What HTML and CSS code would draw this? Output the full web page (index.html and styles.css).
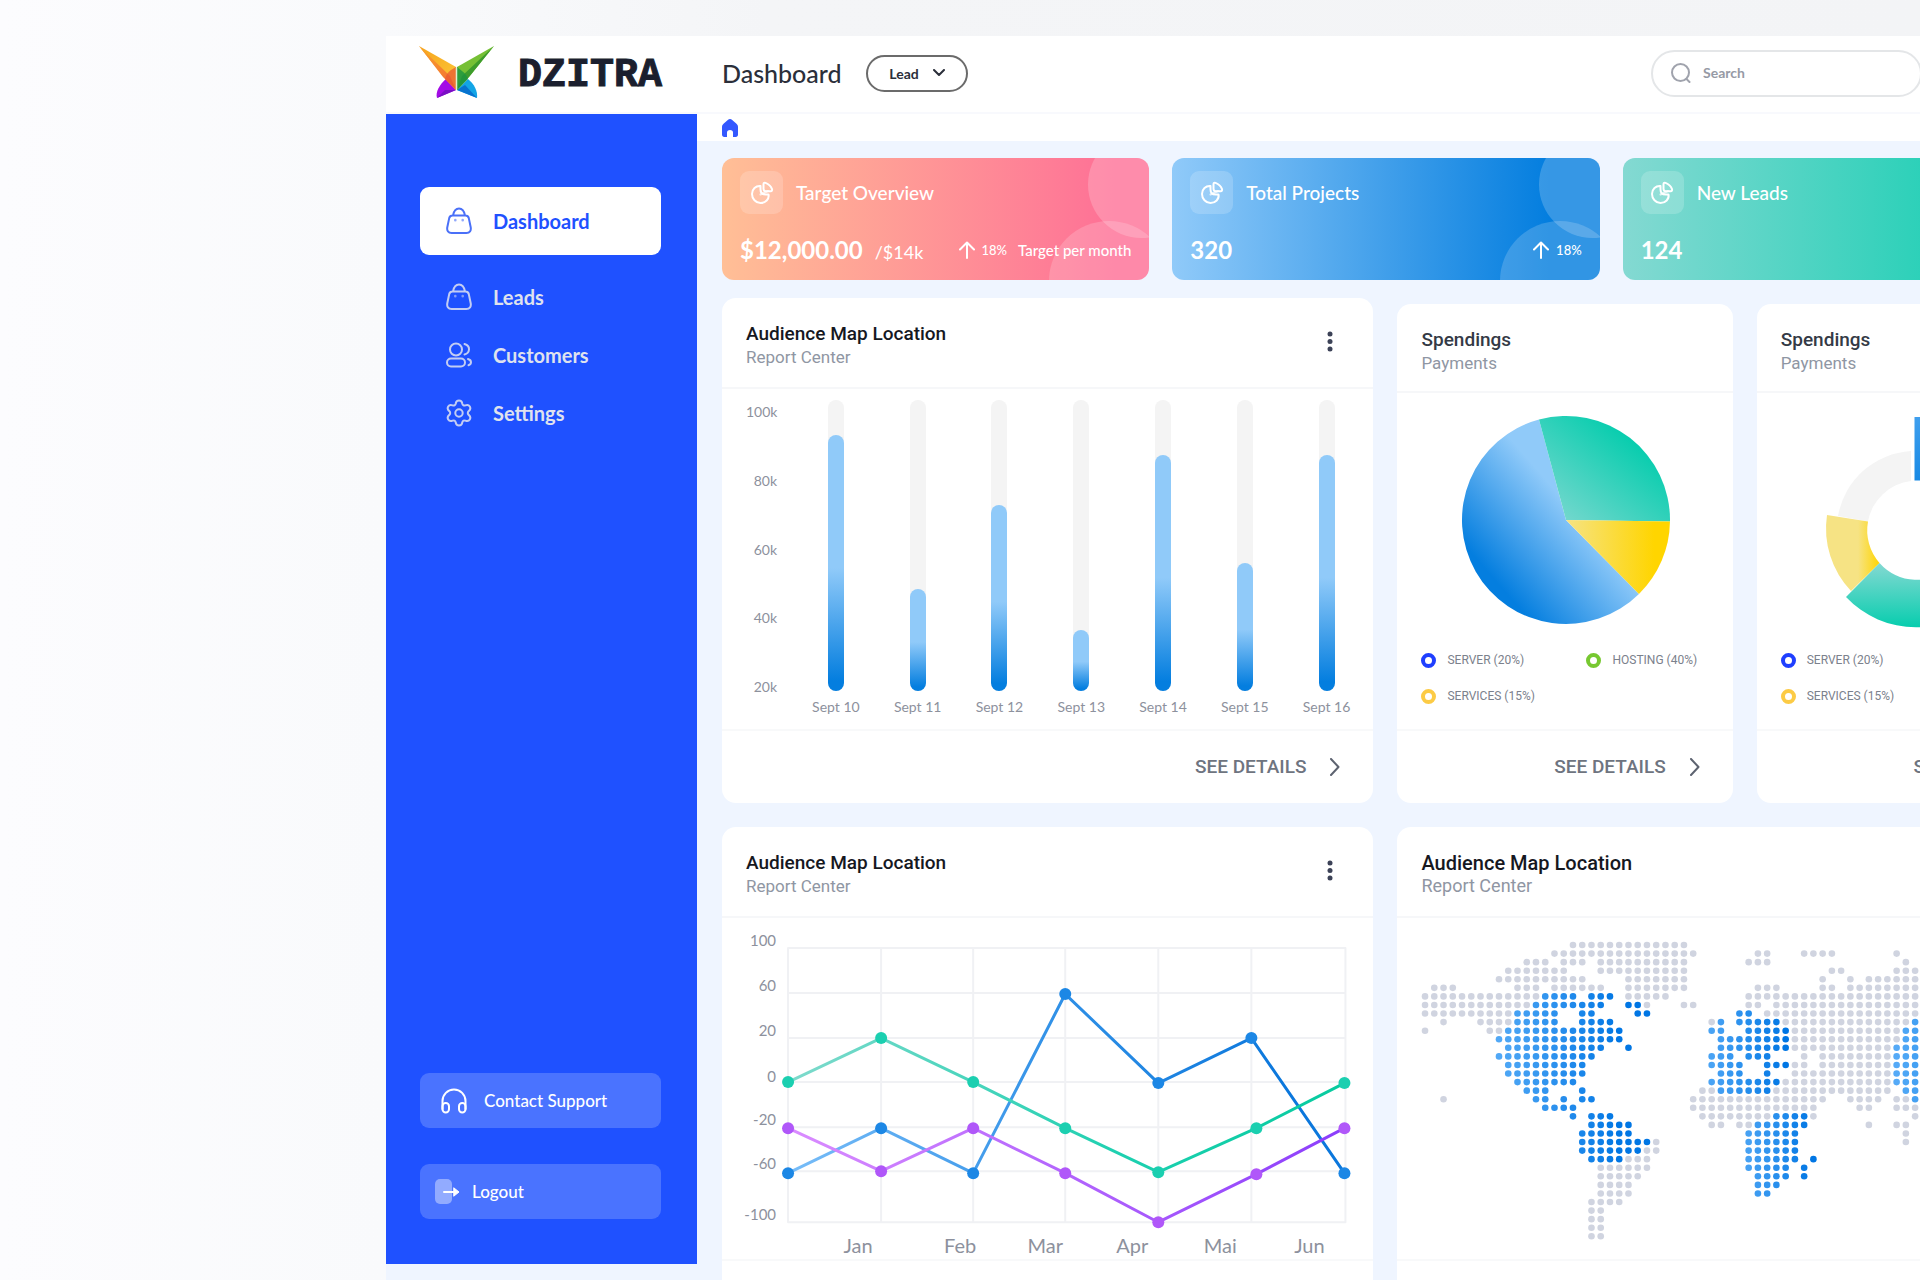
FILE: index.html
```html
<!DOCTYPE html>
<html lang="en">
<head>
<meta charset="utf-8">
<meta name="viewport" content="width=device-width, initial-scale=1">
<title>Dzitra Dashboard</title>
<link rel="stylesheet" href="styles.css">
</head>
<body>
<svg class="defs" width="0" height="0" aria-hidden="true">
  <defs>
    <linearGradient id="info" x1="0" y1="0" x2="1" y2="0"><stop offset="0" stop-color="#78bdf8"/><stop offset=".5" stop-color="#2e8fe6"/><stop offset=".9" stop-color="#0b77dc"/></linearGradient>
    <linearGradient id="mint" x1="0" y1="0" x2="1" y2="0"><stop offset="0" stop-color="#7fdacc"/><stop offset=".6" stop-color="#1dd0b0"/><stop offset="1" stop-color="#07cb9f"/></linearGradient>
    <linearGradient id="violet" x1="0" y1="0" x2="1" y2="0"><stop offset="0" stop-color="#da8cff"/><stop offset="1" stop-color="#8b3dfb"/></linearGradient>
    <linearGradient id="pie-blue" x1=".8" y1=".2" x2=".2" y2=".8"><stop offset=".35" stop-color="#90caf9"/><stop offset="1" stop-color="#047edf"/></linearGradient>
    <linearGradient id="pie-green" x1="0" y1="1" x2="1" y2="0"><stop offset="0" stop-color="#84d9d2"/><stop offset=".75" stop-color="#07cdae"/></linearGradient>
    <linearGradient id="pie-yellow" x1="0" y1="0" x2="1" y2="0"><stop offset="0" stop-color="#f6e384"/><stop offset=".85" stop-color="#ffd500"/></linearGradient>
    <linearGradient id="ring-yellow" x1="0" y1="0" x2="1" y2="0"><stop offset=".6" stop-color="#f6e384"/><stop offset="1" stop-color="#ffd500"/></linearGradient>
    <linearGradient id="ring-green" x1="0" y1="0" x2="0" y2="1"><stop offset="0" stop-color="#84d9d2"/><stop offset="1" stop-color="#07cdae"/></linearGradient>
    <linearGradient id="ring-blue" x1="0" y1="0" x2="0" y2="1"><stop offset="0" stop-color="#3f9fee"/><stop offset=".5" stop-color="#047edf"/></linearGradient>
    <linearGradient id="wing-gold" x1="0" y1="0" x2="1" y2="1"><stop offset="0" stop-color="#f6a31c"/><stop offset="1" stop-color="#fcc93a"/></linearGradient>
    <linearGradient id="wing-orange" x1="0" y1="0" x2="1" y2="1"><stop offset="0" stop-color="#f9a42a"/><stop offset="1" stop-color="#f26a35"/></linearGradient>
  </defs>
  <symbol id="i-bag" viewBox="0 0 26 28"><path d="M6.500 8.500h13c1.800 0 2.800.9 3.300 2.600l1.900 9.200c.6 3.200-.9 5.700-4.300 5.700H5.600c-3.400 0-4.900-2.500-4.300-5.700l1.900-9.200c.5-1.700 1.500-2.600 3.300-2.600zM7 8.500C7.800 4.200 9.800 1.500 13 1.500s5.200 2.700 6 7"/><path d="M9.300 13v.2M16.700 13v.2" stroke-width="2.600" opacity=".6"/></symbol>
  <symbol id="i-users" viewBox="0 0 26 26"><circle cx="10" cy="7.500" r="6"/><rect x="1" y="16.500" width="18" height="8" rx="4"/><path d="M18.500 2c3 1 4.700 3 4.500 5.500s-1.800 4.300-4.500 5M22 17c2 .6 3 1.800 3 3.300s-1 2.500-2.500 3"/></symbol>
  <symbol id="i-gear" viewBox="0 0 26 28"><circle cx="13" cy="14" r="3.700"/><path d="M13 1.500c2 0 3 1 3.300 3.200.4 1.500 1.700 2.200 3.100 1.700 2.100-.9 3.400-.5 4.400 1.200s.7 3.100-1.100 4.500c-1.200 1.100-1.200 2.700 0 3.800 1.800 1.400 2.100 2.800 1.100 4.500s-2.300 2.100-4.400 1.200c-1.400-.5-2.700.2-3.100 1.700C16 25.500 15 26.500 13 26.500s-3-1-3.300-3.200c-.4-1.500-1.700-2.200-3.100-1.700-2.100.9-3.400.5-4.400-1.200s-.7-3.100 1.100-4.500c1.200-1.100 1.200-2.700 0-3.800-1.800-1.400-2.100-2.800-1.100-4.500s2.300-2.100 4.400-1.200c1.400.5 2.700-.2 3.100-1.700C10 2.500 11 1.500 13 1.500z"/></symbol>
  <symbol id="i-pie" viewBox="0 0 24 24"><path d="M10.500 5C5.800 4.500 2 8.300 2 13s3.700 9 8.500 9 9-4 8-8.500h-3c-3 0-5-2-5-5z"/><path d="M13.500 3.200c0-1.200.9-1.700 2-1.300 3 1.100 5.400 3.300 6.500 6.300.4 1.100-.2 2-1.300 2h-4.700c-1.700 0-2.500-.9-2.500-2.500z"/><path d="M10.500 13.500L18 10" opacity=".7"/></symbol>
  <symbol id="i-up" viewBox="0 0 18 18"><path d="M9 17V2M2 8.500L9 1.500l7 7"/></symbol>
  <symbol id="i-next" viewBox="0 0 12 18"><path d="M2 1l7.500 8L2 17"/></symbol>
  <symbol id="i-dots" viewBox="0 0 6 22"><g fill="#3c4257" stroke="none"><circle cx="3" cy="3" r="2.500"/><circle cx="3" cy="10.500" r="2.500"/><circle cx="3" cy="18" r="2.500"/></g></symbol>
</svg>

<div class="app">
  <header class="topbar">
    <a class="brand" href="#">
      <svg width="76" height="54" viewBox="0 0 76 54" aria-hidden="true">
        <path d="M27 33l10 11-19 8c-2-6 3-14 9-19z" fill="#a30be6"/>
        <path d="M37 44l-19 8 8-8z" fill="#7a0fc4"/>
        <path d="M49 33L38 44l20 8c1-7-3-14-9-19z" fill="#13a5e6"/>
        <path d="M38 44l20 8-12-13z" fill="#0873cf"/>
        <path d="M0 0l37 21v23L24 30z" fill="url(#wing-gold)"/>
        <path d="M0 0l31 30 6 14-13-13z" fill="url(#wing-orange)"/>
        <path d="M32 24l5-3v23l-11-11c1-4 3-7 6-9z" fill="#ea5a33" opacity=".75"/>
        <path d="M75 0L38 21v23l12-13z" fill="#76c035"/>
        <path d="M75 0L43 30l-5 14 12-13z" fill="#3d9c2c"/>
        <path d="M38 21l5 4c3 2 5 5 6 8L38 44z" fill="#1b9440" opacity=".8"/>
        <path d="M37.500 22v21" stroke="#dff0d0" stroke-width="1.500"/>
      </svg>
      <span class="brand-name">DZITRA</span>
    </a>
    <h1 class="page-title">Dashboard</h1>
    <button class="role" type="button">Lead
      <svg width="12" height="8" viewBox="0 0 12 8" aria-hidden="true"><path d="M1 1l5 5 5-5"/></svg>
    </button>
    <label class="search">
      <svg width="20" height="20" viewBox="0 0 20 20" aria-hidden="true"><circle cx="9.500" cy="9.500" r="8.500"/><path d="M15.500 16l3 3"/></svg>
      <input type="search" placeholder="Search" aria-label="Search">
    </label>
  </header>

  <div class="shell">
    <aside class="sidebar">
      <nav class="menu">
        <a class="menu-item active" href="#"><svg width="26" height="28"><use href="#i-bag"/></svg>Dashboard</a>
        <a class="menu-item" href="#"><svg width="26" height="28"><use href="#i-bag"/></svg>Leads</a>
        <a class="menu-item" href="#"><svg width="26" height="26"><use href="#i-users"/></svg>Customers</a>
        <a class="menu-item" href="#"><svg width="26" height="28"><use href="#i-gear"/></svg>Settings</a>
      </nav>
      <div class="actions">
        <button class="action support" type="button">
          <svg width="26" height="26" viewBox="0 0 26 26" aria-hidden="true"><path d="M1.500 21v-8a11.500 11.500 0 0 1 23 0v8"/><rect x="1.500" y="15" width="6.500" height="9.500" rx="3.200"/><rect x="18" y="15" width="6.500" height="9.500" rx="3.200"/></svg>
          Contact Support
        </button>
        <button class="action logout" type="button">
          <svg width="26" height="26" viewBox="0 0 26 26" aria-hidden="true"><rect x="1" y="0" width="17" height="25" rx="5" fill="#fff" fill-opacity=".4" stroke="none"/><path d="M10 13h12"/><path d="M20 9l5 4-5 4z" fill="#fff" stroke-width="1"/></svg>
          Logout
        </button>
      </div>
    </aside>

    <main class="main">
      <nav class="crumbs" aria-label="Breadcrumb">
        <a href="#" aria-label="Home"><svg width="16" height="18" viewBox="0 0 16 18"><path d="M8 0c.8 0 1.500.4 2.200 1l4 3.600C15.200 5.500 16 6.500 16 8v7.500c0 1.600-.8 2.500-2.300 2.500H11v-4.500c0-1.500-1-2.500-3-2.500s-3 1-3 2.500V18H2.300C.8 18 0 17.100 0 15.500V8c0-1.500.8-2.500 1.800-3.400l4-3.600C6.500.4 7.200 0 8 0z" fill="#3358ff"/></svg></a>
      </nav>

      <div class="content">
        <section class="stats">
          <article class="stat coral">
            <div class="stat-head"><span class="tile"><svg width="24" height="24"><use href="#i-pie"/></svg></span><h2>Target Overview</h2></div>
            <div class="stat-foot"><strong>$12,000.00</strong><span class="goal">/$14k</span><span class="trend"><svg width="18" height="18"><use href="#i-up"/></svg>18%<span class="note">Target per month</span></span></div>
          </article>
          <article class="stat blue">
            <div class="stat-head"><span class="tile"><svg width="24" height="24"><use href="#i-pie"/></svg></span><h2>Total Projects</h2></div>
            <div class="stat-foot"><strong>320</strong><span class="trend"><svg width="18" height="18"><use href="#i-up"/></svg>18%</span></div>
          </article>
          <article class="stat green">
            <div class="stat-head"><span class="tile"><svg width="24" height="24"><use href="#i-pie"/></svg></span><h2>New Leads</h2></div>
            <div class="stat-foot"><strong>124</strong></div>
          </article>
        </section>

        <section class="row charts">
          <article class="card">
            <div class="card-head"><div><h2>Audience Map Location</h2><p>Report Center</p></div>
              <button class="more" type="button" aria-label="More"><svg width="6" height="22"><use href="#i-dots"/></svg></button></div>
            <div class="bars">
              <div class="scale"><span>100k</span><span>80k</span><span>60k</span><span>40k</span><span>20k</span></div>
              <div class="plot">
                <div class="day"><div class="track"><div class="fill" style="height:88%"></div></div>Sept 10</div>
                <div class="day"><div class="track"><div class="fill" style="height:35%"></div></div>Sept 11</div>
                <div class="day"><div class="track"><div class="fill" style="height:64%"></div></div>Sept 12</div>
                <div class="day"><div class="track"><div class="fill" style="height:21%"></div></div>Sept 13</div>
                <div class="day"><div class="track"><div class="fill" style="height:81%"></div></div>Sept 14</div>
                <div class="day"><div class="track"><div class="fill" style="height:44%"></div></div>Sept 15</div>
                <div class="day"><div class="track"><div class="fill" style="height:81%"></div></div>Sept 16</div>
              </div>
            </div>
            <div class="card-foot"><a href="#">SEE DETAILS <svg width="12" height="18"><use href="#i-next"/></svg></a></div>
          </article>

          <article class="card small">
            <div class="card-head"><div><h2>Spendings</h2><p>Payments</p></div></div>
            <div class="round">
              <svg width="228" height="228" viewBox="0 0 228 228" role="img" aria-label="Spendings by type">
                <path d="M115 114L188 188A104 104 0 1 1 88 13.500z" fill="url(#pie-blue)"/>
                <path d="M115 114L88 13.500A104 104 0 0 1 219 115.500z" fill="url(#pie-green)"/>
                <path d="M115 114L219 115.500A104 104 0 0 1 188 188z" fill="url(#pie-yellow)"/>
              </svg>
            </div>
            <ul class="legend"><li class="server">SERVER (20%)</li><li class="hosting">HOSTING (40%)</li><li class="services">SERVICES (15%)</li></ul>
            <div class="card-foot"><a href="#">SEE DETAILS <svg width="12" height="18"><use href="#i-next"/></svg></a></div>
          </article>

          <article class="card small">
            <div class="card-head"><div><h2>Spendings</h2><p>Payments</p></div></div>
            <div class="round">
              <svg width="228" height="228" viewBox="0 0 228 228" role="img" aria-label="Spendings by share">
                <path d="M101 45A79 79 0 0 0 28 110L58 115.500A49.500 49.500 0 0 1 101 75z" fill="#f4f4f4"/>
                <path d="M17 109L58 115.500A49.500 49.500 0 0 0 69.500 157L41 185A91 91 0 0 1 17 109z" fill="url(#ring-yellow)"/>
                <path d="M69.500 157L36 191A96 96 0 0 0 176 191L141 160A49.500 49.500 0 0 1 69.500 157z" fill="url(#ring-green)"/>
                <path d="M104.500 11V74.500A49.500 49.500 0 0 1 141 160L190 203A114 114 0 0 0 104.500 11z" fill="url(#ring-blue)"/>
              </svg>
            </div>
            <ul class="legend"><li class="server">SERVER (20%)</li><li class="hosting">HOSTING (40%)</li><li class="services">SERVICES (15%)</li></ul>
            <div class="card-foot"><a href="#">SEE DETAILS <svg width="12" height="18"><use href="#i-next"/></svg></a></div>
          </article>
        </section>

        <section class="row wide">
          <article class="card">
            <div class="card-head"><div><h2>Audience Map Location</h2><p>Report Center</p></div>
              <button class="more" type="button" aria-label="More"><svg width="6" height="22"><use href="#i-dots"/></svg></button></div>
            <svg class="lines" viewBox="0 0 651 341" role="img" aria-label="Audience by month">
              <g class="grid"><path d="M66 30H623M66 75H623M66 120H623M66 164H623M66 209H623M66 253H623M66 304H623M66 30V304M159 30V304M251 30V304M343 30V304M436 30V304M529 30V304M623 30V304"/></g>
              <g class="ticks"><text x="54" y="28">100</text><text x="54" y="73">60</text><text x="54" y="118">20</text><text x="54" y="164">0</text><text x="54" y="207">-20</text><text x="54" y="251">-60</text><text x="54" y="302">-100</text></g>
              <g class="months"><text x="136" y="335">Jan</text><text x="238" y="335">Feb</text><text x="323" y="335">Mar</text><text x="410" y="335">Apr</text><text x="498" y="335">Mai</text><text x="587" y="335">Jun</text></g>
              <g class="series">
                <polyline stroke="url(#info)" points="66,255 159,210 251,255 343,76 436,165 529,120 622,255"/>
                <polyline stroke="url(#mint)" points="66,164 159,120 251,164 343,210 436,254 534,210 622,165"/>
                <polyline stroke="url(#violet)" points="66,210 159,253 251,210 343,255 436,304 534,256 622,210"/>
              </g>
              <g fill="#1c87e5"><circle cx="66" cy="255" r="6"/><circle cx="159" cy="210" r="6"/><circle cx="251" cy="255" r="6"/><circle cx="343" cy="76" r="6"/><circle cx="436" cy="165" r="6"/><circle cx="529" cy="120" r="6"/><circle cx="622" cy="255" r="6"/></g>
              <g fill="#1bcfb0"><circle cx="66" cy="164" r="6"/><circle cx="159" cy="120" r="6"/><circle cx="251" cy="164" r="6"/><circle cx="343" cy="210" r="6"/><circle cx="436" cy="254" r="6"/><circle cx="534" cy="210" r="6"/><circle cx="622" cy="165" r="6"/></g>
              <g fill="#b057f9"><circle cx="66" cy="210" r="6"/><circle cx="159" cy="253" r="6"/><circle cx="251" cy="210" r="6"/><circle cx="343" cy="255" r="6"/><circle cx="436" cy="304" r="6"/><circle cx="534" cy="256" r="6"/><circle cx="622" cy="210" r="6"/></g>
            </svg>
            <div class="card-foot"></div>
          </article>
          <article class="card geo">
            <div class="card-head"><div><h2>Audience Map Location</h2><p>Report Center</p></div></div>
            <svg class="map" id="map" viewBox="0 0 694 341" role="img" aria-label="World map"></svg>
            <div class="card-foot"></div>
          </article>
        </section>
      </div>
    </main>
  </div>
</div>
<script src="map.js"></script>
</body>
</html>
```
FILE: styles.css
```css
*, *::before, *::after { box-sizing: border-box; }

body {
  margin: 0;
  height: 100vh;
  overflow: hidden;
  background: linear-gradient(90deg, #fcfcfe 0, #f9fafc 20%, #f4f5f7 40%, #f3f4f6 100%);
  font-family: Lato, "Open Sans", sans-serif;
  color: #2b2f3a;
}

h1, h2, p, ul { margin: 0; padding: 0; }
a { color: inherit; text-decoration: none; }
button { font: inherit; color: inherit; border: 0; background: none; padding: 0; cursor: pointer; }
svg { display: block; flex: none; fill: none; stroke-linecap: round; stroke-linejoin: round; }
.defs { position: absolute; }

.app {
  display: flex;
  flex-direction: column;
  width: 90vw;
  height: calc(100vh - 36px);
  margin: 36px 0 0 386px;
  background: #eff5ff;
}

/* Top bar */
.topbar {
  display: flex;
  align-items: center;
  flex: none;
  height: 78px;
  padding: 0 192px 2px 33px;
  background: #fff;
  border-bottom: 2px solid #f8f9fd;
}
.brand { display: flex; align-items: center; gap: 23px; width: 303px; }
.brand-name {
  padding-top: 6px;
  font: 700 40px/48px "Liberation Mono", monospace;
  color: #1b1f2e;
  -webkit-text-stroke: 1px #1b1f2e;
}
.page-title { font-size: 25px; line-height: 32px; font-weight: 500; width: 144px; }
.role {
  display: flex;
  align-items: center;
  justify-content: center;
  gap: 14px;
  width: 102px;
  height: 37px;
  border: 2px solid #6b6b6b;
  border-radius: 19px;
  font-size: 14px;
  font-weight: 700;
}
.role svg { stroke: #2b2f3a; stroke-width: 2; }
.search {
  display: flex;
  align-items: center;
  gap: 12px;
  width: 271px;
  height: 47px;
  margin-left: auto;
  padding: 0 18px;
  border: 2px solid #e4e6e8;
  border-radius: 24px;
}
.search svg { stroke: #a0a3ad; stroke-width: 2; }
.search input {
  flex: 1;
  min-width: 0;
  border: 0;
  outline: 0;
  padding: 0;
  background: none;
  font: 700 14px/20px Lato, sans-serif;
}
.search input::placeholder { color: #969aa5; opacity: 1; }

.shell { display: flex; flex: 1; min-height: 0; }

/* Sidebar */
.sidebar {
  display: flex;
  flex-direction: column;
  justify-content: space-between;
  flex: none;
  width: 311px;
  margin-bottom: 16px;
  padding: 73px 36px 45px 34px;
  background: #1f51ff;
}
.menu { display: flex; flex-direction: column; }
.menu-item {
  display: flex;
  align-items: center;
  gap: 21px;
  height: 58px;
  padding-left: 26px;
  font-size: 20px;
  font-weight: 700;
  color: #dfe2ee;
}
.menu-item svg { stroke: #c3cdf3; stroke-width: 2; width: 26px; }
.menu-item.active {
  height: 68px;
  margin-bottom: 13px;
  border-radius: 9px;
  background: #fff;
  color: #1f51ff;
}
.menu-item.active svg { stroke: #4a70f8; }
.actions { display: flex; flex-direction: column; gap: 36px; }
.action {
  display: flex;
  align-items: center;
  height: 55px;
  border-radius: 9px;
  background: #4a73ff;
  color: #fff;
  font-size: 17px;
  font-weight: 500;
}
.action svg { stroke: #fff; stroke-width: 2; }
.support { gap: 17px; padding-left: 21px; }
.logout { gap: 12px; padding-left: 14px; }

/* Main column */
.main { flex: 1; min-width: 0; overflow: hidden; }
.crumbs { display: flex; align-items: center; height: 27px; padding: 0 25px; background: #fff; }
.content { padding: 17px 22px 24px 25px; }

.stats { display: grid; grid-template-columns: repeat(3, 1fr); gap: 23px; margin: 0 42px 18px 0; }
.stat {
  position: relative;
  overflow: hidden;
  display: flex;
  flex-direction: column;
  justify-content: space-between;
  height: 122px;
  padding: 13px 18px 14px;
  border-radius: 12px;
  color: #fff;
}
.stat::before, .stat::after { content: ""; position: absolute; border-radius: 50%; background: #fff; opacity: .2; }
.stat::before { width: 107px; height: 107px; right: -46px; top: -27px; }
.stat::after { width: 120px; height: 120px; right: -20px; bottom: -61px; opacity: .18; }
.coral { background: linear-gradient(to right, #ffbf96, #fe7096 92%); }
.blue { background: linear-gradient(to right, #90caf9, #047edf 88%); }
.green { background: linear-gradient(to right, #84d9d2, #07cdae); }
.stat > * { position: relative; z-index: 1; }
.stat-head { display: flex; align-items: center; gap: 13px; }
.stat-head h2 { font-size: 19px; line-height: 24px; font-weight: 500; }
.tile { display: grid; place-items: center; width: 43px; height: 43px; border-radius: 9px; background: rgba(255, 255, 255, .18); }
.stat svg { stroke: #fff; stroke-width: 2; }
.stat-foot { display: flex; align-items: center; height: 32px; }
.stat-foot strong { font-size: 24px; line-height: 32px; font-weight: 700; }
.goal { margin: 4px 0 0 12px; font-size: 18px; }
.trend { display: flex; align-items: center; gap: 6px; margin-left: auto; font-size: 13px; font-weight: 500; }
.note { margin-left: 5px; font-size: 15px; }

.row { display: grid; gap: 24px; margin-bottom: 24px; }
.charts { grid-template-columns: 651fr 335fr 335fr; align-items: end; }
.wide { grid-template-columns: 651fr 694fr; }

/* Cards */
.card { background: #fff; border-radius: 14px; font-family: Roboto, sans-serif; min-width: 0; }
.card-head {
  display: flex;
  justify-content: space-between;
  height: 91px;
  padding: 24px 40px 0 24px;
  border-bottom: 2px solid #f6f7f9;
}
.card-head h2 { font-size: 19px; line-height: 24px; font-weight: 500; color: #16181f; }
.card-head p { font-size: 17px; line-height: 22px; color: #8f96a3; }
.small .card-head h2 { color: #343a46; }
.geo .card-head h2 { font-size: 20px; }
.geo .card-head p { font-size: 18px; }
.more { align-self: flex-start; margin-top: 9px; }
.card-foot {
  display: flex;
  align-items: center;
  justify-content: flex-end;
  height: 74px;
  padding: 0 32px;
  border-top: 2px solid #f8f9fa;
}
.card-foot a { display: flex; align-items: center; gap: 23px; font-size: 19px; line-height: 24px; font-weight: 500; color: #6e7480; }
.card-foot svg { stroke: #5d6370; stroke-width: 2; }

/* Bar chart */
.bars { display: flex; height: 340px; padding: 11px 6px 0 24px; color: #8d919d; font-family: Lato, sans-serif; font-size: 14px; }
.scale { display: flex; flex-direction: column; justify-content: space-between; width: 31px; height: 297px; padding-top: 2px; font-size: 14px; line-height: 20px; text-align: right; }
.plot { display: grid; grid-template-columns: repeat(7, 1fr); flex: 1; margin-left: 18px; }
.day { display: flex; flex-direction: column; align-items: center; gap: 6px; line-height: 20px; white-space: nowrap; }
.track { display: flex; align-items: flex-end; width: 16px; height: 291px; border-radius: 8px; background: #f4f4f4; }
.fill { width: 100%; border-radius: 8px; background: linear-gradient(to top, #047edf 4%, #90caf9 48%); }

/* Round charts */
.small .card-head { height: 89px; }
.round { display: flex; justify-content: center; height: 242px; padding-top: 13px; }
.legend {
  display: grid;
  grid-template-columns: 165px 1fr;
  row-gap: 16px;
  height: 94px;
  padding: 15px 12px 0 24px;
  list-style: none;
  align-content: start;
  font-size: 12px;
  line-height: 20px;
  color: #7b818c;
}
.legend li { display: flex; align-items: center; gap: 11px; white-space: nowrap; }
.legend li::before { content: ""; width: 15px; height: 15px; border: 4px solid #1f3fff; border-radius: 50%; }
.legend .hosting::before { border-color: #77c831; }
.legend .services::before { border-color: #fccb45; }

/* Line chart and map */
.lines, .map { width: 100%; }
.grid { stroke: #f0f1f4; stroke-width: 2; }
.series { stroke-width: 3; }
.ticks, .months { fill: #8d919d; font-family: Lato, sans-serif; }
.ticks { font-size: 15px; text-anchor: end; }
.months { font-size: 20px; text-anchor: middle; }
```
FILE: map.js
```js
// Each row of the dotted map: column ranges, "b" marks highlighted regions.
const rows = [
  "16-28",
  "14-29 36-37 41-44 51",
  "11-13 15-17 19-28 35-37 52",
  "9-15 19-28 44-45 51-53",
  "8-17 22-28 43 46 48-53",
  "1-3 10-12 14-19 22-28 36-38 43-44 46-53",
  "0-12 b13-16 b18-20 22-26 35-53",
  "0-11 b12-19 b22-23 24 28-29 35-36 38-53",
  "0-9 b10-14 b17-18 b23-24 b34-35 37-53",
  "2 6-9 b10-14 b17-20 31 b32 b34-38 39-52 b53",
  "0 7-8 b9-21 b31-32 b35-39 40-51 b52-53",
  "b8-21 b32-39 40-51 b52-53",
  "b9-19 b22 b32-39 40-50 b51-53",
  "b8-18 b31-33 b35-37 41 43-50 b51-53",
  "b9-17 b31-34 b37-39 40-41 43-50 b51-53",
  "b9-17 b32-34 b37 40-50 b51-53",
  "b10-16 b31-38 39-50 b51-53",
  "b11-13 b17 30-31 b32-37 38-50 b52-53",
  "2 b12-13 b15 b17-18 29-43 46-49 51-52 b53",
  "b13-16 29-42 47-48 51-53",
  "b16 b18-20 30-37 b38-41 42 53",
  "b18-22 31-32 34-35 b36-41 48 51-52",
  "b17-22 b35-40 52",
  "b17-24 25 b35-40 52",
  "b17-23 24-25 b35-40",
  "b18-21 22-24 b35-40 b42",
  "19-24 b35-39 b41",
  "19-23 b36-39 b41",
  "19-22 b36-38",
  "19-22 b36-37",
  "18-21",
  "18-19",
  "18-19",
  "18-19",
  "18-19"
];

// Highlighted regions run from a light blue on their left side to a deep blue on their right.
const regions = [[5, 21], [28, 39], [32, 42], [49, 62]];
const light = [100, 180, 250];
const deep = [0, 118, 228];

function shade(col, row) {
  const [from, to] = regions[col < 26 ? 0 : col > 50 ? 3 : row > 18 ? 2 : 1];
  const t = Math.min(1, Math.max(0, (col - from) / (to - from)));
  return "rgb(" + light.map((c, k) => Math.round(c + (deep[k] - c) * t)).join(",") + ")";
}

const map = document.getElementById("map");
rows.forEach((line, row) => {
  line.split(" ").forEach((part) => {
    const on = part[0] === "b";
    const [from, to = from] = part.replace("b", "").split("-").map(Number);
    for (let col = from; col <= to; col++) {
      const dot = document.createElementNS("http://www.w3.org/2000/svg", "circle");
      dot.setAttribute("cx", (28 + col * 9.24).toFixed(2));
      dot.setAttribute("cy", (27 + row * 8.56).toFixed(2));
      dot.setAttribute("r", "3.3");
      dot.setAttribute("fill", on ? shade(col, row) : "#d0d4e0");
      map.appendChild(dot);
    }
  });
});
```
